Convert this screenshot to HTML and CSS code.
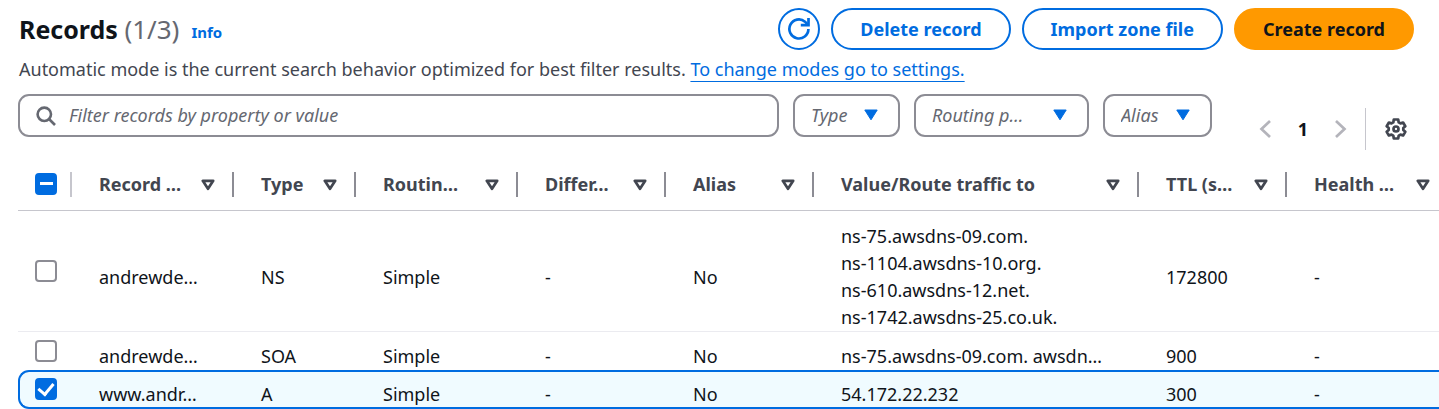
FILE: index.html
```html
<!DOCTYPE html>
<html lang="en">
<head>
<meta charset="utf-8">
<title>Records</title>
<link rel="stylesheet" href="styles.css">
</head>
<body>
<svg class="symbols" aria-hidden="true">
  <symbol id="sort" viewBox="0 0 14 12"><path d="M1.8 1.800h10.400L7 9.800z" fill="none" stroke="currentColor" stroke-width="2.700" stroke-linejoin="round"/></symbol>
  <symbol id="caret" viewBox="0 0 14 12"><path d="M.8 1h12.400L7 10.800z" fill="currentColor" stroke="currentColor" stroke-linejoin="round"/></symbol>
</svg>
<main class="panel">
  <header class="header">
    <h1 class="title">Records <span class="count">(1/3)</span></h1>
    <a class="info" href="#">Info</a>
    <div class="actions">
      <button class="btn btn-icon" type="button" aria-label="Refresh">
        <svg width="24" height="24" viewBox="0 0 24 24" fill="none" stroke="currentColor" stroke-width="2.700"><path d="M21.400 12a9.500 9.500 0 1 1-3.400-7.300l3 3.200"/><path d="M21.500 1v7.200h-7.700"/></svg>
      </button>
      <button class="btn" type="button">Delete record</button>
      <button class="btn" type="button">Import zone file</button>
      <button class="btn btn-primary" type="button">Create record</button>
    </div>
  </header>
  <p class="description">Automatic mode is the current search behavior optimized for best filter results. <a class="link" href="#">To change modes go to settings.</a></p>
  <div class="toolbar">
    <label class="search">
      <svg width="20" height="20" viewBox="0 0 20 20" fill="none" stroke="currentColor" stroke-width="2.600" aria-hidden="true"><circle cx="8.300" cy="8.300" r="6.700"/><path d="M13 13l6 6"/></svg>
      <input type="search" aria-label="Filter records" placeholder="Filter records by property or value">
    </label>
    <div class="filter filter-type"><select aria-label="Type"><option>Type</option></select><svg><use href="#caret"/></svg></div>
    <div class="filter filter-routing"><select aria-label="Routing policy"><option>Routing p…</option></select><svg><use href="#caret"/></svg></div>
    <div class="filter filter-alias"><select aria-label="Alias"><option>Alias</option></select><svg><use href="#caret"/></svg></div>
    <nav class="pages" aria-label="Pagination">
      <button class="plain" type="button" aria-label="Previous page" disabled><svg width="12" height="18" viewBox="0 0 12 18" fill="none" stroke="currentColor" stroke-width="2.700"><path d="M11 1L2.500 9l8.500 8"/></svg></button>
      <button class="plain page" type="button">1</button>
      <button class="plain" type="button" aria-label="Next page" disabled><svg width="12" height="18" viewBox="0 0 12 18" fill="none" stroke="currentColor" stroke-width="2.700"><path d="M1 1l8.500 8L1 17"/></svg></button>
      <button class="plain settings" type="button" aria-label="Preferences"><svg width="22" height="22" viewBox="0 0 22 22" fill="none" stroke="currentColor" stroke-width="2.700" stroke-linejoin="round"><path d="M8.800 1.500h4.400l.5 2.900 1.800 1 2.600-.9 2.200 3.700-2 1.800v2l2 1.800-2.200 3.700-2.600-.9-1.800 1-.5 2.900H8.800l-.5-2.900-1.800-1-2.600.9-2.200-3.700 2-1.800v-2l-2-1.800 2.200-3.700 2.600.9 1.800-1z"/><circle cx="11" cy="11" r="2.500"/></svg></button>
    </nav>
  </div>
  <table class="records">
    <colgroup><col class="c-check"><col class="c-wide"><col class="c-type"><col class="c-wide"><col class="c-mid"><col class="c-mid"><col class="c-value"><col class="c-mid"><col></colgroup>
    <thead>
      <tr>
        <th class="check"><div class="head"><input class="box mixed" type="checkbox" aria-label="Select all records" checked></div></th>
        <th><div class="head">Record …<button class="plain" type="button" aria-label="Sort by record name"><svg><use href="#sort"/></svg></button></div></th>
        <th><div class="head">Type<button class="plain" type="button" aria-label="Sort by type"><svg><use href="#sort"/></svg></button></div></th>
        <th><div class="head">Routin…<button class="plain" type="button" aria-label="Sort by routing policy"><svg><use href="#sort"/></svg></button></div></th>
        <th><div class="head">Differ…<button class="plain" type="button" aria-label="Sort by differentiator"><svg><use href="#sort"/></svg></button></div></th>
        <th><div class="head">Alias<button class="plain" type="button" aria-label="Sort by alias"><svg><use href="#sort"/></svg></button></div></th>
        <th><div class="head">Value/Route traffic to<button class="plain" type="button" aria-label="Sort by value"><svg><use href="#sort"/></svg></button></div></th>
        <th><div class="head">TTL (s…<button class="plain" type="button" aria-label="Sort by TTL"><svg><use href="#sort"/></svg></button></div></th>
        <th><div class="head">Health …<button class="plain" type="button" aria-label="Sort by health check"><svg><use href="#sort"/></svg></button></div></th>
      </tr>
    </thead>
    <tbody>
      <tr>
        <td class="check"><input class="box" type="checkbox" aria-label="Select NS record"></td>
        <td>andrewde…</td><td>NS</td><td>Simple</td><td>-</td><td>No</td>
        <td>ns-75.awsdns-09.com.<br>ns-1104.awsdns-10.org.<br>ns-610.awsdns-12.net.<br>ns-1742.awsdns-25.co.uk.</td>
        <td>172800</td><td>-</td>
      </tr>
      <tr>
        <td class="check"><input class="box" type="checkbox" aria-label="Select SOA record"></td>
        <td>andrewde…</td><td>SOA</td><td>Simple</td><td>-</td><td>No</td>
        <td>ns-75.awsdns-09.com. awsdn…</td>
        <td>900</td><td>-</td>
      </tr>
      <tr class="selected">
        <td class="check"><input class="box" type="checkbox" aria-label="Select A record" checked></td>
        <td>www.andr…</td><td>A</td><td>Simple</td><td>-</td><td>No</td>
        <td>54.172.22.232</td>
        <td>300</td><td>-</td>
      </tr>
    </tbody>
  </table>
</main>
</body>
</html>
```

FILE: styles.css
```css
* { box-sizing: border-box; }

body {
  margin: 0;
  background: #fff;
  color: #0f141a;
  font: 18px/27px "Noto Sans", "Open Sans", sans-serif;
}

button, input, select { font: inherit; margin: 0; }
svg { display: block; flex: none; }
.symbols { position: absolute; width: 0; height: 0; }

.panel { padding: 8px 0 0 18px; overflow: hidden; }

.header { display: flex; align-items: center; padding: 0 25px 0 1px; }
.title { margin: 0; font-size: 25px; line-height: 42px; }
.count { color: #656871; font-size: 26px; font-weight: 400; }
.info { margin: 6px 0 0 12px; color: #006ce0; font-size: 15px; font-weight: 700; text-decoration: none; }

.actions { display: flex; gap: 11px; margin-left: auto; }
.btn {
  height: 42px;
  padding: 0 27px;
  border: 2px solid #006ce0;
  border-radius: 21px;
  background: #fff;
  color: #006ce0;
  font-weight: 700;
  white-space: nowrap;
}
.btn-icon { display: grid; place-items: center; width: 42px; padding: 0; }
.btn-primary { border-color: #ff9900; background: #ff9900; color: #0f141a; }

.description { margin: 6px 0 11px; padding-left: 1px; color: #424650; }
.link { color: #006ce0; text-decoration: underline 1px; text-underline-offset: 5px; text-decoration-skip-ink: none; }

.toolbar { display: flex; gap: 14px; padding-right: 25px; }
.search {
  display: flex;
  flex: 1;
  align-items: center;
  gap: 13px;
  height: 43px;
  padding: 0 16px;
  border: 2px solid #8c8c94;
  border-radius: 11px;
  color: #656871;
}
.search input { flex: 1; min-width: 0; padding: 0; border: 0; outline: 0; background: none; }
.search input::placeholder { color: #656871; font-style: italic; opacity: 1; }

.filter { position: relative; }
.filter select {
  width: 100%;
  height: 43px;
  padding: 0 16px;
  border: 2px solid #8c8c94;
  border-radius: 11px;
  appearance: none;
  background: #fff;
  color: #656871;
  font-style: italic;
}
.filter svg { position: absolute; top: 15px; right: 22px; width: 14px; height: 12px; color: #006ce0; pointer-events: none; }
.filter-type { width: 107px; }
.filter-routing { width: 175px; }
.filter-alias { width: 109px; }

.plain { display: grid; place-items: center; padding: 0; border: 0; background: none; color: #424650; }
.plain:disabled { color: #b4b4bb; }
.pages { display: flex; align-items: center; margin: 14px 0 0 33px; height: 42px; }
.page { width: 64px; color: #0f141a; font-weight: 700; }
.settings { height: 42px; margin-left: 18px; padding: 0 7px 0 19px; border-left: 1px solid #c6c6cd; }

.records {
  width: calc(100% + 10px);
  margin-top: 9px;
  border-collapse: separate;
  border-spacing: 0;
  table-layout: fixed;
}
.c-check { width: 54px; }
.c-wide { width: 162px; }
.c-type { width: 122px; }
.c-mid { width: 148px; }
.c-value { width: 325px; }

th { height: 52px; padding: 0; border-bottom: 1px solid #c6c6cd; color: #424650; text-align: left; white-space: nowrap; }
.head { display: flex; align-items: center; justify-content: space-between; height: 25px; padding: 0 17px 0 27px; border-right: 2px solid #8c8c94; }
.head svg { width: 14px; height: 12px; }
.check .head { padding: 0 0 2px 17px; border-color: #c6c6cd; }

td { padding: 12px 0 0 27px; border-bottom: 1px solid #ebebf0; white-space: nowrap; }
td.check { padding: 0 0 4px 17px; }

.box {
  display: inline-grid;
  place-items: center;
  width: 22px;
  height: 22px;
  border: 2px solid #8c8c94;
  border-radius: 4px;
  appearance: none;
  background: #fff;
  vertical-align: middle;
}
.box:checked { border-color: #006ce0; background: #006ce0; }
.box:checked::before { content: ""; width: 7px; height: 12px; margin-bottom: 4px; border: solid #fff; border-width: 0 3px 3px 0; transform: rotate(40deg); }
.box.mixed:checked::before { width: 13px; height: 3px; margin: 0; border: 0; background: #fff; transform: none; }

tr:nth-child(2) td { padding-top: 11px; border-bottom: 0; }
tr:nth-child(2) td.check { padding-top: 0; }
.selected td { padding-top: 9px; border-top: 2px solid #006ce0; border-bottom: 2px solid #006ce0; background: #f0fbff; line-height: 26px; }
tr.selected td.check { padding: 0 0 5px 15px; border-left: 2px solid #006ce0; border-radius: 11px 0 0 11px; }
```
